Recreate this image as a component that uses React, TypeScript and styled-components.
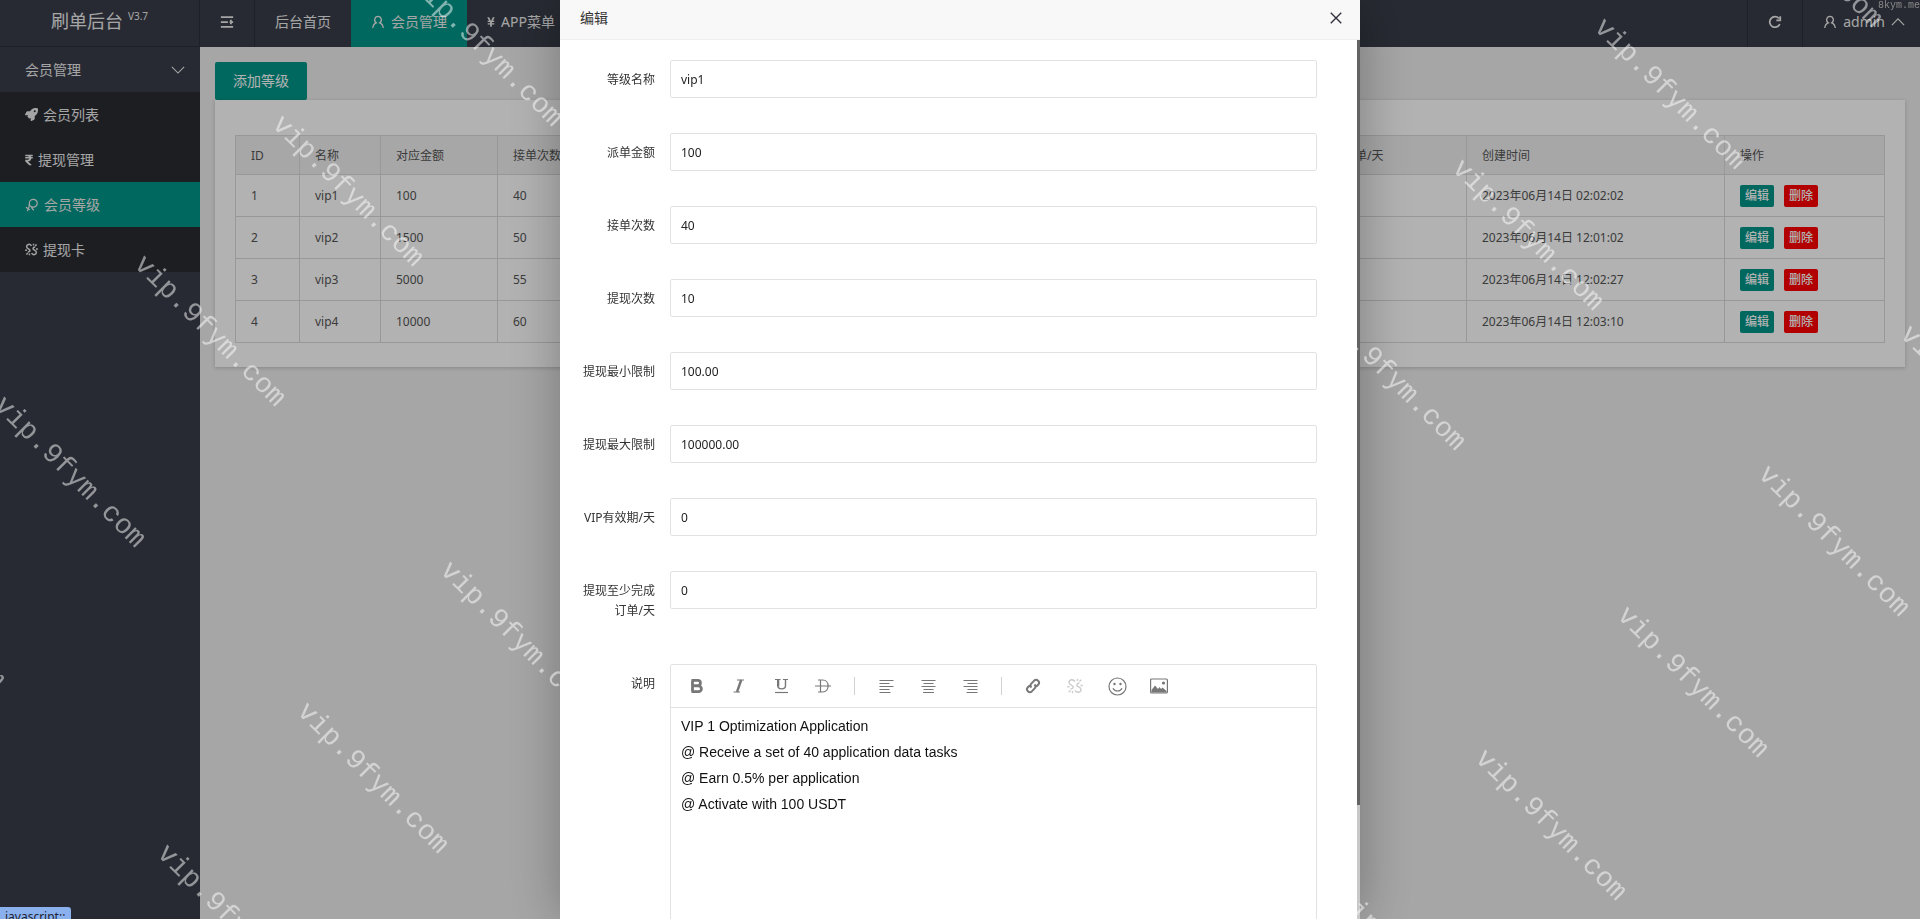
import React from 'react';
import styled, { createGlobalStyle, css } from 'styled-components';
import { FaRocket, FaRupeeSign, FaYenSign } from 'react-icons/fa';

const sans = `"Noto Sans", "Noto Sans CJK SC", sans-serif`;

const GlobalStyle = createGlobalStyle`
  * { box-sizing: border-box; }
  html, body, #root { height: 100%; }
  body {
    margin: 0;
    overflow: hidden;
    background: #eee;
    font: 14px/20px ${sans};
  }
  button, input { font-family: inherit; }
  a { color: inherit; text-decoration: none; }
`;

const Page = styled.div`
  display: flex;
  height: 100%;
`;

const Sidebar = styled.aside`
  flex: 0 0 200px;
  background: #393d49;
  color: #ededed;
`;

const Brand = styled.div`
  display: flex;
  justify-content: center;
  gap: 5px;
  height: 47px;
  padding-top: 8px;
  border-bottom: 1px solid #2c2f39;
  border-right: 1px solid #2c2f39;
  font-size: 18px;
  line-height: 26px;
`;

const Version = styled.sup`
  font-size: 10px;
  line-height: 16px;
  vertical-align: top;
`;

const GroupTitle = styled.a`
  display: flex;
  align-items: center;
  justify-content: space-between;
  height: 45px;
  padding: 0 15px 0 25px;
`;

const SubMenu = styled.nav`
  background: #2a2b32;
`;

const MenuItem = styled.a<{ $active?: boolean }>`
  display: flex;
  align-items: center;
  gap: 5px;
  height: 45px;
  padding-left: 25px;
  ${(p) => p.$active && css`background: #009688;`}
`;

const RupeeIcon = styled(FaRupeeSign)`
  width: 8px;
  height: 12px;
`;

const YenIcon = styled(FaYenSign)`
  width: 8px;
  height: 12px;
`;

const Main = styled.main`
  flex: 1;
  min-width: 0;
`;

const TopBar = styled.header`
  display: flex;
  height: 47px;
  background: #393d49;
  color: #ededed;
`;

const Tab = styled.a<{ $active?: boolean; $divided?: boolean }>`
  display: flex;
  align-items: center;
  gap: 6px;
  padding: 0 20px 3px;
  white-space: nowrap;
  ${(p) => p.$active && css`background: #009688;`}
  ${(p) => p.$divided && css`border-right: 1px solid #2c2f39;`}
`;

const TopRight = styled.div`
  display: flex;
  margin-left: auto;
  > a { border-left: 1px solid #2c2f39; }
`;

const UserLink = styled(Tab)`
  padding: 0 15px 3px 20px;
`;

const Content = styled.section`
  padding: 15px;
`;

const AddButton = styled.button`
  display: block;
  height: 38px;
  padding: 0 18px 2px;
  border: 0;
  border-radius: 2px;
  background: #009688;
  color: #fff;
  font-size: 14px;
`;

const Card = styled.div`
  padding: 35px 20px 24px;
  background: #fff;
  box-shadow: 0 1px 4px rgba(0, 0, 0, 0.2);
`;

const LevelTable = styled.table`
  width: 100%;
  table-layout: fixed;
  border-collapse: collapse;
  color: #555;
  font-size: 12px;
  line-height: 20px;
  th, td {
    height: 42px;
    padding: 0 15px;
    border: 1px solid #dadada;
    text-align: left;
    font-weight: 400;
    white-space: nowrap;
    overflow: hidden;
  }
  th {
    height: 39px;
    padding-top: 2px;
    background: #f0f0f0;
  }
`;

const Actions = styled.div`
  display: flex;
  gap: 10px;
`;

const RowButton = styled.button<{ $danger?: boolean }>`
  width: 34px;
  height: 22px;
  padding: 0;
  border: 0;
  border-radius: 2px;
  background: ${(p) => (p.$danger ? '#f00' : '#009688')};
  color: #fff;
  font-size: 12px;
  font-weight: 500;
  line-height: 22px;
`;

const Shade = styled.div`
  position: fixed;
  inset: 0;
  display: flex;
  justify-content: center;
  background: rgba(0, 0, 0, 0.3);
`;

const Dialog = styled.div`
  display: flex;
  flex-direction: column;
  width: 800px;
  height: 100%;
  background: #fff;
  box-shadow: 1px 1px 50px rgba(0, 0, 0, 0.3);
`;

const DialogHead = styled.div`
  display: flex;
  align-items: center;
  justify-content: space-between;
  flex: 0 0 40px;
  padding: 0 17px 3px 20px;
  border-bottom: 1px solid #eee;
  background: #f8f8f8;
  color: #333;
`;

const CloseButton = styled.button`
  display: flex;
  padding: 0;
  border: 0;
  background: none;
  color: #2e2d3c;
`;

const DialogBody = styled.div`
  display: flex;
  flex: 1;
  min-height: 0;
`;

const Form = styled.form`
  display: flex;
  flex: 1;
  flex-direction: column;
  gap: 35px;
  min-width: 0;
  padding: 20px 40px 0 20px;
  overflow: hidden;
`;

const ScrollTrack = styled.div`
  width: 3px;
  background: #c8c8c8;
`;

const ScrollThumb = styled.div`
  height: 87%;
  background: #636363;
`;

const Field = styled.div`
  display: flex;
  align-items: flex-start;
  gap: 15px;
`;

const Label = styled.label`
  width: 75px;
  padding: 10px 0 8px;
  color: #333;
  font-size: 12px;
  line-height: 20px;
  text-align: right;
`;

const TextInput = styled.input`
  flex: 1;
  height: 38px;
  padding: 0 10px;
  border: 1px solid #e2e2e2;
  border-radius: 2px;
  background: #fff;
  color: #222;
  font-size: 12px;
  outline: 0;
`;

const Editor = styled.div`
  flex: 1;
  height: 340px;
  border: 1px solid #e2e2e2;
  border-radius: 2px;
`;

const Toolbar = styled.div`
  display: flex;
  align-items: center;
  height: 43px;
  padding-left: 5px;
  border-bottom: 1px solid #e2e2e2;
`;

const Tool = styled.button<{ $off?: boolean }>`
  display: flex;
  align-items: center;
  justify-content: center;
  width: 42px;
  height: 30px;
  padding: 0;
  border: 0;
  background: none;
  color: ${(p) => (p.$off ? '#ccc' : '#777')};
`;

const Separator = styled.span`
  width: 1px;
  height: 18px;
  margin: 0 10px;
  background: #d2d2d2;
`;

const EditorText = styled.div`
  padding: 5px 10px;
  color: #111;
  font: 14px/26px "Liberation Sans", Arial, sans-serif;
  outline: 0;
  p { margin: 0; }
`;

const WatermarkLayer = styled.div`
  position: fixed;
  inset: 0;
  overflow: hidden;
  pointer-events: none;
`;

const Watermark = styled.span<{ $x: number; $y: number }>`
  position: absolute;
  left: ${(p) => p.$x}px;
  top: ${(p) => p.$y}px;
  color: rgba(255, 255, 255, 0.5);
  font: 28px/30px "Liberation Mono", monospace;
  white-space: nowrap;
  transform: rotate(45deg);
  transform-origin: 9px 17px;
`;

const CornerMark = styled.span`
  position: absolute;
  top: 0;
  right: 0;
  color: #8a8a8a;
  font: 10px/11px "Liberation Mono", monospace;
`;

const StatusBubble = styled.div`
  position: fixed;
  left: 0;
  bottom: 0;
  height: 12px;
  padding: 0 6px 0 5px;
  overflow: hidden;
  border-radius: 0 3px 0 0;
  background: #8ab0ee;
  color: #1d2330;
  font-size: 12px;
  line-height: 20px;
`;

type IconProps = { d: string; size?: number; w?: number; box?: number };

function Icon({ d, size = 14, w = 1.4, box = 16 }: IconProps) {
  return (
    <svg width={size} height={size} viewBox={`0 0 ${box} ${box}`} fill="none" stroke="currentColor" strokeWidth={w} aria-hidden="true">
      <path d={d} />
    </svg>
  );
}

const paths = {
  user: 'M8 1.5a3.8 4 0 0 1 2 7.4c2.300.8 3.700 2.800 4 6M8 1.500a3.800 4 0 0 0-2 7.400c-2.300.8-3.700 2.800-4 6',
  down: 'M1 4.500 8 11.500l7-7',
  up: 'M1 11.500 8 4.500l7 7',
  close: 'M2 2l12 12M14 2 2 14',
  menu: 'M1 2.500h14M1 13.500h14M1 8h8M11 8h4M12.500 5.500v5',
  refresh: 'M13.500 10.300A6 6 0 1 1 12.500 4M14 1.500v4.500h-4.500',
  award: 'M9.500 1.500a4.500 4.500 0 1 1 0 9 4.500 4.500 0 0 1 0-9M5 5.500C5 10 4.500 12.500 2.500 15M1 10.500l4.500 3M7 10.500l3 3.500',
  broken: 'M8 3.500C6 .5 2 1.500 2 4.500 2 7 5.500 7 6 8.500S5 11 3.500 11M8 12.500c2 3 6 2 6-1 0-2.500-3.500-2.500-4-4S11 5 12.500 5M10.500 3V.8M12.500 3.500 14.300 1.800M13.500 7.500h2.300M5.500 13v2.200M3.500 12.500 1.700 14.200M2.500 8.800H.2',
};

function AlignIcon({ side }: { side: 'left' | 'center' | 'right' }) {
  const widths = [14, 10, 14, 10, 11];
  const start = (w: number) => (side === 'left' ? 0 : side === 'right' ? 14 - w : (14 - w) / 2);
  return (
    <svg width="15" height="15" viewBox="0 0 14 15" stroke="currentColor" aria-hidden="true">
      {widths.map((w, i) => (
        <line key={i} x1={start(w)} x2={start(w) + w} y1={1.5 + i * 3} y2={1.5 + i * 3} />
      ))}
    </svg>
  );
}

const BoldIcon = () => (
  <svg width="14" height="16" viewBox="0 0 14 16" fill="none" stroke="currentColor" strokeWidth="2.800" aria-hidden="true">
    <path d="M2.500 2.400v11.200M1.500 2.400h6.300a2.600 2.600 0 0 1 0 5.200H2.500M2.500 7.800h6a2.900 2.900 0 0 1 0 5.800h-7" />
  </svg>
);

const ItalicIcon = () => (
  <svg width="12" height="16" viewBox="0 0 12 16" fill="none" stroke="currentColor" aria-hidden="true">
    <path d="M4 2h7M.500 14h6.500" />
    <path d="M8.200 2 4 14" strokeWidth="2.400" />
  </svg>
);

const UnderlineIcon = () => (
  <svg width="15" height="16" viewBox="0 0 15 16" fill="none" stroke="currentColor" aria-hidden="true">
    <path d="M1 1.500h5.500M9 1.500h5" />
    <path d="M1 14.500h13" strokeWidth="1.200" />
    <path d="M3.800 1.500v6c0 4.500 7.700 4.500 7.700 0v-6" strokeWidth="1.400" />
    <path d="M4.200 1.500v7" strokeWidth="2.200" />
  </svg>
);

const StrikeIcon = () => (
  <svg width="16" height="16" viewBox="0 0 16 16" fill="none" stroke="currentColor" strokeWidth="1.200" aria-hidden="true">
    <path d="M3 2h4.500c7.500 0 7.500 12 0 12H3M5.500 2v12M0 8h16" />
  </svg>
);

const LinkIcon = () => (
  <svg width="16" height="16" viewBox="0 0 16 16" fill="none" stroke="currentColor" strokeWidth="2" aria-hidden="true">
    <path d="M6.500 9.500C5 8 5.200 6.800 6.300 5.600l2.900-3C11.800.300 15.600 3.800 13.300 6.500l-2 2.100M9.500 6.500c1.500 1.500 1.300 2.700.2 3.900l-2.900 3C4.200 15.700.4 12.200 2.700 9.500l2-2.100" />
  </svg>
);

const SmileIcon = () => (
  <svg width="19" height="19" viewBox="0 0 19 19" fill="none" stroke="currentColor" strokeWidth="1.200" aria-hidden="true">
    <circle cx="9.500" cy="9.500" r="8.500" />
    <path d="M5 11.300c1.500 3.600 7.500 3.600 9 0" />
    <circle cx="6.500" cy="7" r=".6" fill="currentColor" />
    <circle cx="12.500" cy="7" r=".6" fill="currentColor" />
  </svg>
);

const PictureIcon = () => (
  <svg width="18" height="16" viewBox="0 0 18 16" fill="none" stroke="currentColor" strokeWidth="1.200" aria-hidden="true">
    <rect x=".6" y="1" width="16.800" height="14" rx="1" />
    <path d="M1.500 14.500V12L5 7.500 8 11l1.500-2 1.500 2 1.500-1.500 4 3.500v1.500z" fill="currentColor" stroke="none" />
    <circle cx="13.500" cy="5" r="1.600" fill="currentColor" stroke="none" />
  </svg>
);

const columns = [
  { name: 'ID', width: 64 },
  { name: '名称', width: 81 },
  { name: '对应金额', width: 117 },
  { name: '接单次数', width: 117 },
  { name: '提现次数' },
  { name: '提现最小限制' },
  { name: '提现最大限制' },
  { name: 'VIP有效期/天' },
  { name: '提现至少完成订单/天', width: 211 },
  { name: '创建时间', width: 258 },
  { name: '操作', width: 160 },
];

const levels = [
  ['1', 'vip1', '100', '40', '10', '100.00', '100000.00', '0', '0', '2023年06月14日 02:02:02'],
  ['2', 'vip2', '1500', '50', '10', '100.00', '100000.00', '0', '0', '2023年06月14日 12:01:02'],
  ['3', 'vip3', '5000', '55', '10', '100.00', '100000.00', '0', '0', '2023年06月14日 12:02:27'],
  ['4', 'vip4', '10000', '60', '10', '100.00', '100000.00', '0', '0', '2023年06月14日 12:03:10'],
];

const fields = [
  ['等级名称', 'vip1'],
  ['派单金额', '100'],
  ['接单次数', '40'],
  ['提现次数', '10'],
  ['提现最小限制', '100.00'],
  ['提现最大限制', '100000.00'],
  ['VIP有效期/天', '0'],
  ['提现至少完成订单/天', '0'],
];

const description = [
  'VIP 1 Optimization Application',
  '@ Receive a set of 40 application data tasks',
  '@ Earn 0.5% per application',
  '@ Activate with 100 USDT',
];

const marks = [
  [420, -13], [281, 127], [143, 267], [3, 408], [-137, 549],
  [449, 573], [306, 714], [166, 856],
  [1740, -112], [1603, 30], [1461, 171], [1323, 311],
  [1909, 337], [1767, 477], [1626, 618], [1484, 761], [1345, 901],
];

export default function App() {
  return (
    <>
      <GlobalStyle />
      <Page>
        <Sidebar>
          <Brand>刷单后台<Version>V3.7</Version></Brand>
          <GroupTitle href="#">会员管理<Icon d={paths.down} w={1.3} /></GroupTitle>
          <SubMenu>
            <MenuItem href="#"><FaRocket size={13} />会员列表</MenuItem>
            <MenuItem href="#"><RupeeIcon />提现管理</MenuItem>
            <MenuItem href="#" $active><Icon d={paths.award} />会员等级</MenuItem>
            <MenuItem href="#"><Icon d={paths.broken} size={13} w={1.8} />提现卡</MenuItem>
          </SubMenu>
        </Sidebar>
        <Main>
          <TopBar>
            <Tab href="#" $divided aria-label="收起菜单"><Icon d={paths.menu} w={2} /></Tab>
            <Tab href="#">后台首页</Tab>
            <Tab href="#" $active><Icon d={paths.user} w={1.5} />会员管理</Tab>
            <Tab href="#"><YenIcon />APP菜单</Tab>
            <TopRight>
              <Tab href="#" aria-label="刷新"><Icon d={paths.refresh} w={2} /></Tab>
              <UserLink href="#"><Icon d={paths.user} w={1.5} />admin<Icon d={paths.up} /></UserLink>
            </TopRight>
          </TopBar>
          <Content>
            <AddButton type="button">添加等级</AddButton>
            <Card>
              <LevelTable>
                <colgroup>
                  {columns.map((c) => <col key={c.name} width={c.width} />)}
                </colgroup>
                <thead>
                  <tr>{columns.map((c) => <th key={c.name}>{c.name}</th>)}</tr>
                </thead>
                <tbody>
                  {levels.map((row) => (
                    <tr key={row[0]}>
                      {row.map((cell, i) => <td key={i}>{cell}</td>)}
                      <td>
                        <Actions>
                          <RowButton type="button">编辑</RowButton>
                          <RowButton type="button" $danger>删除</RowButton>
                        </Actions>
                      </td>
                    </tr>
                  ))}
                </tbody>
              </LevelTable>
            </Card>
          </Content>
        </Main>
      </Page>
      <Shade>
        <Dialog role="dialog" aria-label="编辑">
          <DialogHead>
            编辑
            <CloseButton type="button" aria-label="关闭"><Icon d={paths.close} w={1.6} /></CloseButton>
          </DialogHead>
          <DialogBody>
            <Form>
              {fields.map(([label, value], i) => (
                <Field key={label}>
                  <Label htmlFor={`field-${i}`}>{label}</Label>
                  <TextInput id={`field-${i}`} type="text" defaultValue={value} />
                </Field>
              ))}
              <Field>
                <Label as="span" id="description-label">说明</Label>
                <Editor>
                  <Toolbar>
                    <Tool type="button" aria-label="加粗"><BoldIcon /></Tool>
                    <Tool type="button" aria-label="斜体"><ItalicIcon /></Tool>
                    <Tool type="button" aria-label="下划线"><UnderlineIcon /></Tool>
                    <Tool type="button" aria-label="删除线"><StrikeIcon /></Tool>
                    <Separator />
                    <Tool type="button" aria-label="左对齐"><AlignIcon side="left" /></Tool>
                    <Tool type="button" aria-label="居中对齐"><AlignIcon side="center" /></Tool>
                    <Tool type="button" aria-label="右对齐"><AlignIcon side="right" /></Tool>
                    <Separator />
                    <Tool type="button" aria-label="插入链接"><LinkIcon /></Tool>
                    <Tool type="button" aria-label="清除链接" $off><Icon d={paths.broken} size={16} /></Tool>
                    <Tool type="button" aria-label="表情"><SmileIcon /></Tool>
                    <Tool type="button" aria-label="图片"><PictureIcon /></Tool>
                  </Toolbar>
                  <EditorText role="textbox" aria-labelledby="description-label" contentEditable suppressContentEditableWarning>
                    {description.map((line) => <p key={line}>{line}</p>)}
                  </EditorText>
                </Editor>
              </Field>
            </Form>
            <ScrollTrack><ScrollThumb /></ScrollTrack>
          </DialogBody>
        </Dialog>
      </Shade>
      <WatermarkLayer aria-hidden="true">
        {marks.map(([x, y]) => <Watermark key={`${x},${y}`} $x={x - 9} $y={y - 16}>vip.9fym.com</Watermark>)}
        <CornerMark>8kym.me</CornerMark>
      </WatermarkLayer>
      <StatusBubble>javascript:;</StatusBubble>
    </>
  );
}
